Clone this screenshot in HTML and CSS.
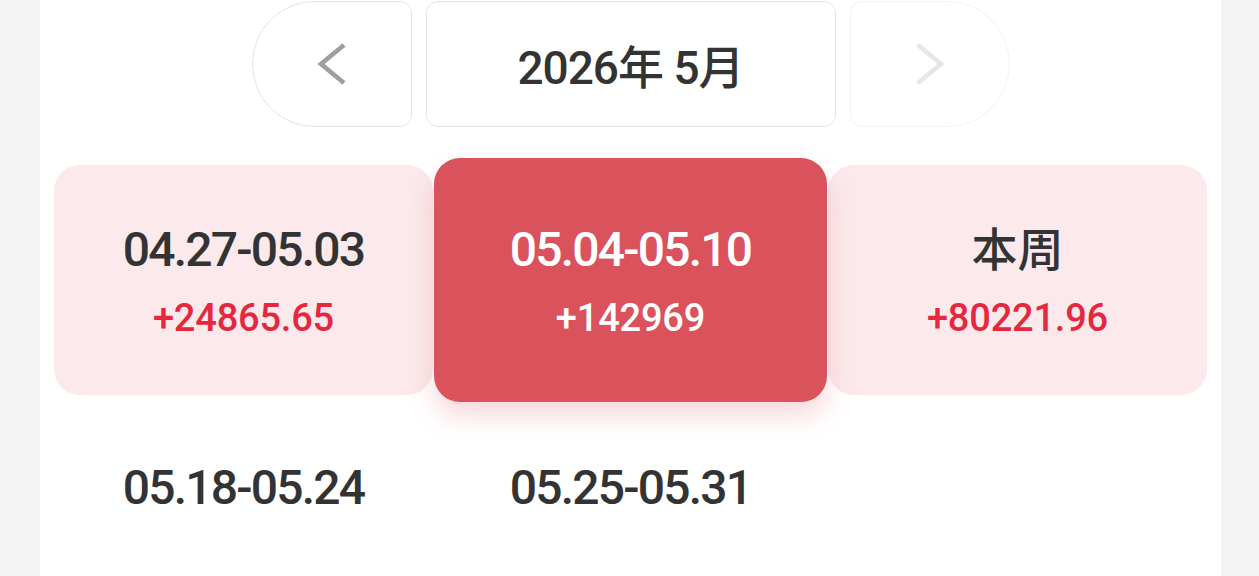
FILE: index.html
```html
<!DOCTYPE html>
<html lang="zh">
<head>
<meta charset="utf-8">
<title>周选择</title>
<link rel="stylesheet" href="styles.css">
</head>
<body>
<main class="panel">
  <header class="month-bar">
    <button class="nav nav-prev" type="button" aria-label="上一月">
      <svg class="chev" viewBox="0 0 30 44" width="30" height="44"><polyline points="27,3 4,22 27,41" fill="none" stroke="#9e9e9e" stroke-width="4.5" stroke-linecap="butt" stroke-linejoin="miter"/></svg>
    </button>
    <div class="month">2026年 5月</div>
    <button class="nav nav-next" type="button" aria-label="下一月" disabled>
      <svg class="chev" viewBox="0 0 30 44" width="30" height="44"><polyline points="3,3 26,22 3,41" fill="none" stroke="#e6e6e6" stroke-width="4.5" stroke-linecap="butt" stroke-linejoin="miter"/></svg>
    </button>
  </header>

  <section class="weeks">
    <div class="week card">
      <div class="range">04.27-05.03</div>
      <div class="amount">+24865.65</div>
    </div>
    <div class="week card active">
      <div class="range">05.04-05.10</div>
      <div class="amount">+142969</div>
    </div>
    <div class="week card">
      <div class="range cjk">本周</div>
      <div class="amount">+80221.96</div>
    </div>
    <div class="week">
      <div class="range">05.18-05.24</div>
      <div class="amount"></div>
    </div>
    <div class="week">
      <div class="range">05.25-05.31</div>
      <div class="amount"></div>
    </div>
  </section>
</main>
</body>
</html>
```

FILE: styles.css
```css
* { box-sizing: border-box; }

html, body {
  margin: 0;
  padding: 0;
  height: 100%;
}

body {
  background: #f4f4f4;
  font-family: Roboto, "Noto Sans CJK SC", sans-serif;
  color: #333333;
  overflow: hidden;
}

.panel {
  margin: 0 38px 0 40px;
  height: 100%;
  overflow: hidden;
  background: #ffffff;
  padding: 1px 14px 0 14px;
}

.month-bar {
  display: flex;
  justify-content: center;
  gap: 14px;
  height: 126px;
}

.nav {
  width: 160px;
  height: 126px;
  background: #ffffff;
  border: 1px solid #e3e3e3;
  padding: 0;
  margin: 0;
  display: flex;
  align-items: center;
  justify-content: center;
}

.nav-prev {
  border-radius: 63px 12px 12px 63px;
}

.nav-next {
  border-radius: 12px 63px 63px 12px;
  border-color: #f3f3f3;
}

.month {
  width: 410px;
  height: 126px;
  border: 1px solid #e3e3e3;
  border-radius: 12px;
  display: flex;
  align-items: center;
  justify-content: center;
  font-size: 46px;
  font-weight: 500;
  letter-spacing: -1px;
  color: #333333;
}

.weeks {
  margin-top: 38px;
  display: grid;
  grid-template-columns: repeat(3, 1fr);
  column-gap: 8px;
  row-gap: 8px;
}

.week {
  height: 230px;
  padding-top: 57px;
  display: flex;
  flex-direction: column;
  align-items: center;
  gap: 16px;
}

.card {
  background: #fbe9eb;
  border-radius: 26px;
}

.card.active {
  background: #d9525c;
  margin: -7px -7px;
  height: 244px;
  padding-top: 64px;
  position: relative;
  z-index: 1;
  box-shadow: 0 14px 26px rgba(217, 82, 92, 0.22);
}

.range {
  height: 56px;
  line-height: 56px;
  font-size: 48px;
  font-weight: 500;
  letter-spacing: -1.8px;
  color: #333333;
}

.range.cjk {
  font-size: 46px;
  letter-spacing: 0;
  font-weight: 500;
}

.amount {
  height: 48px;
  line-height: 48px;
  font-size: 38px;
  font-weight: 500;
  letter-spacing: -0.2px;
  color: #e5283d;
}

.active .range,
.active .amount {
  color: #ffffff;
}
```
